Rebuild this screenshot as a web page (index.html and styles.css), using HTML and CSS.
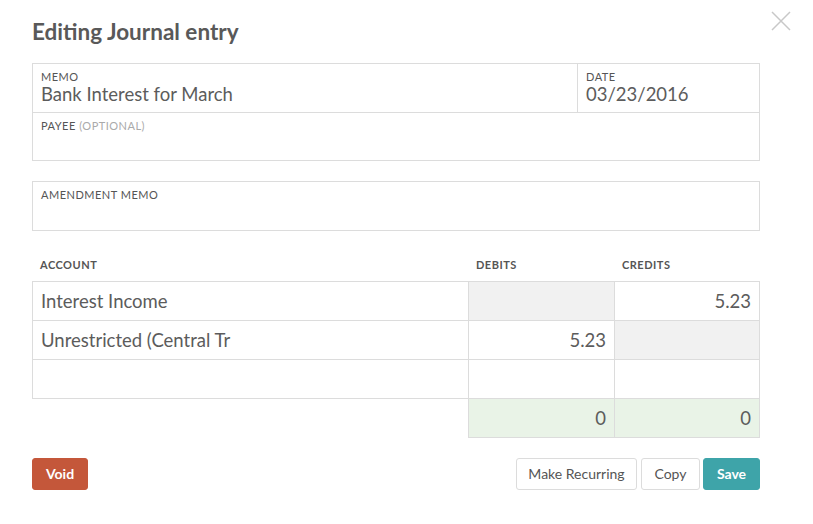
FILE: index.html
```html
<!DOCTYPE html>
<html>
<head>
<meta charset="utf-8">
<link rel="stylesheet" href="styles.css">
</head>
<body>
<div class="modal">
  <button class="close" aria-label="Close">
    <svg width="20" height="20" viewBox="0 0 20 20"><path d="M1 1L19 19M19 1L1 19" stroke="#c8c8c8" stroke-width="1.5" fill="none"/></svg>
  </button>
  <h1 class="title">Editing Journal entry</h1>

  <div class="box">
    <div class="row">
      <div class="field memo">
        <div class="label">Memo</div>
        <div class="value">Bank Interest for March</div>
      </div>
      <div class="field date">
        <div class="label">Date</div>
        <div class="value">03/23/2016</div>
      </div>
    </div>
    <div class="row">
      <div class="field">
        <div class="label">Payee <span class="opt">(optional)</span></div>
        <div class="value"></div>
      </div>
    </div>
  </div>

  <div class="box amend">
    <div class="row">
      <div class="field">
        <div class="label">Amendment memo</div>
        <div class="value"></div>
      </div>
    </div>
  </div>

  <div class="table">
    <div class="thead">
      <div class="th c-acc">Account</div>
      <div class="th c-num">Debits</div>
      <div class="th c-num">Credits</div>
    </div>
    <div class="tr first">
      <div class="td c-acc">Interest Income</div>
      <div class="td c-num disabled"></div>
      <div class="td c-num">5.23</div>
    </div>
    <div class="tr">
      <div class="td c-acc">Unrestricted (Central Tr</div>
      <div class="td c-num">5.23</div>
      <div class="td c-num disabled"></div>
    </div>
    <div class="tr">
      <div class="td c-acc"></div>
      <div class="td c-num"></div>
      <div class="td c-num"></div>
    </div>
    <div class="tr total">
      <div class="td c-acc blank"></div>
      <div class="td c-num sum">0</div>
      <div class="td c-num sum">0</div>
    </div>
  </div>

  <div class="actions">
    <button class="btn void">Void</button>
    <div class="right">
      <button class="btn recur">Make Recurring</button>
      <button class="btn copy">Copy</button>
      <button class="btn save">Save</button>
    </div>
  </div>
</div>
</body>
</html>
```

FILE: styles.css
```css
* { box-sizing: border-box; }
html, body { margin: 0; padding: 0; background: #fff; }
body {
  font-family: Lato, "Open Sans", sans-serif;
  color: #555;
  width: 813px;
  height: 524px;
  overflow: hidden;
}
.modal {
  position: relative;
  padding: 18px 53px 0 32px;
}
.close {
  position: absolute;
  top: 11px;
  left: 771px;
  width: 20px;
  height: 20px;
  padding: 0;
  border: 0;
  background: none;
}
.close svg { display: block; }
.title {
  margin: 0 0 17px 0;
  font-size: 22.5px;
  font-weight: 700;
  line-height: 28px;
  color: #595959;
}
.box {
  border: 1px solid #dcdcdc;
}
.box .row { display: flex; height: 48px; }
.box .row + .row { border-top: 1px solid #dcdcdc; height: 48px; }
.field { flex: 1; padding: 6px 8px 0 8px; }
.field.date { flex: 0 0 182px; border-left: 1px solid #dcdcdc; }
.label {
  font-size: 11px;
  line-height: 13px;
  letter-spacing: 0.5px;
  text-transform: uppercase;
  color: #555;
}
.label .opt { color: #aaa; }
.value {
  font-size: 18.5px;
  font-weight: 400;
  line-height: 22px;
  color: #5c5c5c;
}
.amend { margin-top: 20px; }
.amend .row { height: 48px; }

.table { margin-top: 24px; }
.thead { display: flex; height: 26px; }
.th {
  font-size: 11px;
  font-weight: 700;
  letter-spacing: 0.5px;
  text-transform: uppercase;
  color: #555;
  padding: 3px 8px 0 8px;
  line-height: 13px;
}
.c-acc { flex: 0 0 436px; }
.c-num { flex: 0 0 146px; }
.tr { display: flex; height: 39px; }
.td {
  border-left: 1px solid #dcdcdc;
  border-bottom: 1px solid #dcdcdc;
  font-size: 18.5px;
  font-weight: 400;
  line-height: 38px;
  padding: 0 8px;
  color: #5c5c5c;
}
.td:last-child { border-right: 1px solid #dcdcdc; }
.tr.first .td { border-top: 1px solid #dcdcdc; height: 40px; line-height: 38px; }
.tr.first { height: 40px; }
.td.c-num { text-align: right; }
.td.disabled { background: #f1f1f1; }
.td.blank { border-left: 0; border-bottom: 0; }
.td.sum { background: #e9f3e7; }

.actions {
  display: flex;
  justify-content: space-between;
  margin-top: 20px;
}
.right { display: flex; gap: 4px; }
.btn {
  font-family: Lato, "Open Sans", sans-serif;
  height: 32px;
  padding: 0 0 1px 0;
  font-size: 14px;
  border: 1px solid #dcdcdc;
  border-radius: 3px;
  background: #fff;
  color: #555;
}
.btn.recur { width: 121px; }
.btn.copy { width: 59px; }
.btn.void {
  background: #c4573a;
  border-color: #c4573a;
  color: #fff;
  font-weight: 700;
  width: 56px;
}
.btn.save {
  background: #3ea4a9;
  border-color: #3ea4a9;
  color: #fff;
  font-weight: 700;
  width: 57px;
}
.right .btn.save { margin-left: -1px; }
```
